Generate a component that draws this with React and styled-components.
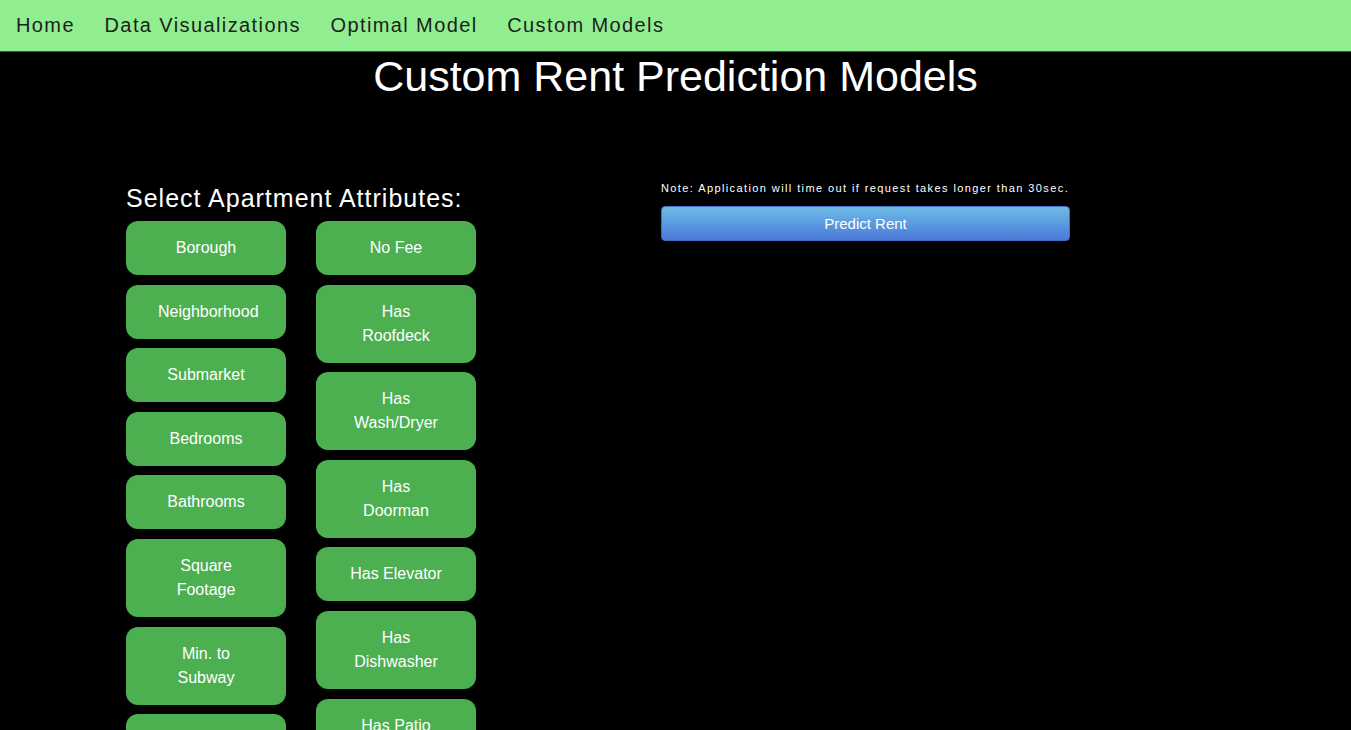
import React from "react";
import styled, { createGlobalStyle } from "styled-components";

const Global = createGlobalStyle`
  html, body {
    margin: 0;
    padding: 0;
    background: #000;
    overflow: hidden;
    font-family: "Liberation Sans", Arial, sans-serif;
  }
`;

const Page = styled.div`
  width: 100%;
  min-height: 730px;
  background: #000;
  color: #fff;
`;

const NavBar = styled.nav`
  display: flex;
  align-items: center;
  height: 51px;
  padding-left: 1.2px;
  background: #90ee90;
  border-bottom: 1px solid #3d553d;
`;

const NavLink = styled.a`
  display: block;
  padding: 0 14.8px;
  font-size: 20px;
  letter-spacing: 1.4px;
  color: #1c1f1c;
  text-decoration: none;
  line-height: 51px;
`;

const Title = styled.h1`
  margin: 0;
  text-align: center;
  font-weight: 400;
  font-size: 43px;
  line-height: 48px;
  color: #fff;
`;

const Main = styled.div`
  display: flex;
  align-items: flex-start;
  gap: 185px;
  padding-left: 126px;
  margin-top: 82px;
`;

const LeftPanel = styled.section`
  display: flex;
  flex-direction: column;
`;

const Heading = styled.h2`
  margin: 2px 0 8px;
  font-size: 25px;
  font-weight: 400;
  letter-spacing: 1px;
  line-height: 29px;
  color: #fff;
`;

const Columns = styled.div`
  display: flex;
  gap: 30px;
  align-items: flex-start;
`;

const Column = styled.div`
  display: flex;
  flex-direction: column;
  gap: 9.6px;
`;

const AttrButton = styled.button`
  width: 160px;
  padding: 15px 32px;
  border: none;
  border-radius: 12px;
  background: #4caf50;
  color: #fff;
  font-family: "Liberation Sans", Arial, sans-serif;
  font-size: 16px;
  line-height: 24px;
  text-align: center;
  cursor: pointer;
  box-sizing: border-box;
`;

const RightPanel = styled.section`
  display: flex;
  flex-direction: column;
  width: 409px;
`;

const Note = styled.p`
  margin: 0 0 11px;
  font-size: 11px;
  letter-spacing: 1.4px;
  line-height: 13px;
  color: #fff;
  white-space: nowrap;
`;

const PredictButton = styled.button`
  height: 35px;
  width: 100%;
  border: 1px solid #3f6fc4;
  border-radius: 4px;
  background: linear-gradient(to bottom, #6fbbe6 0%, #5b9be0 50%, #4a78d6 100%);
  color: #fff;
  font-family: "Liberation Sans", Arial, sans-serif;
  font-size: 15px;
  cursor: pointer;
`;

const leftAttrs = [
  "Borough",
  "Neighborhood",
  "Submarket",
  "Bedrooms",
  "Bathrooms",
  "Square Footage",
  "Min. to Subway",
  "Floor",
];

const rightAttrs = [
  "No Fee",
  "Has Roofdeck",
  "Has Wash/Dryer",
  "Has Doorman",
  "Has Elevator",
  "Has Dishwasher",
  "Has Patio",
];

export default function App() {
  return (
    <Page>
      <Global />
      <NavBar>
        <NavLink href="#">Home</NavLink>
        <NavLink href="#">Data Visualizations</NavLink>
        <NavLink href="#">Optimal Model</NavLink>
        <NavLink href="#">Custom Models</NavLink>
      </NavBar>
      <Title>Custom Rent Prediction Models</Title>
      <Main>
        <LeftPanel>
          <Heading>Select Apartment Attributes:</Heading>
          <Columns>
            <Column>
              {leftAttrs.map((a) => (
                <AttrButton key={a}>{a}</AttrButton>
              ))}
            </Column>
            <Column>
              {rightAttrs.map((a) => (
                <AttrButton key={a}>{a}</AttrButton>
              ))}
            </Column>
          </Columns>
        </LeftPanel>
        <RightPanel>
          <Note>Note: Application will time out if request takes longer than 30sec.</Note>
          <PredictButton>Predict Rent</PredictButton>
        </RightPanel>
      </Main>
    </Page>
  );
}
